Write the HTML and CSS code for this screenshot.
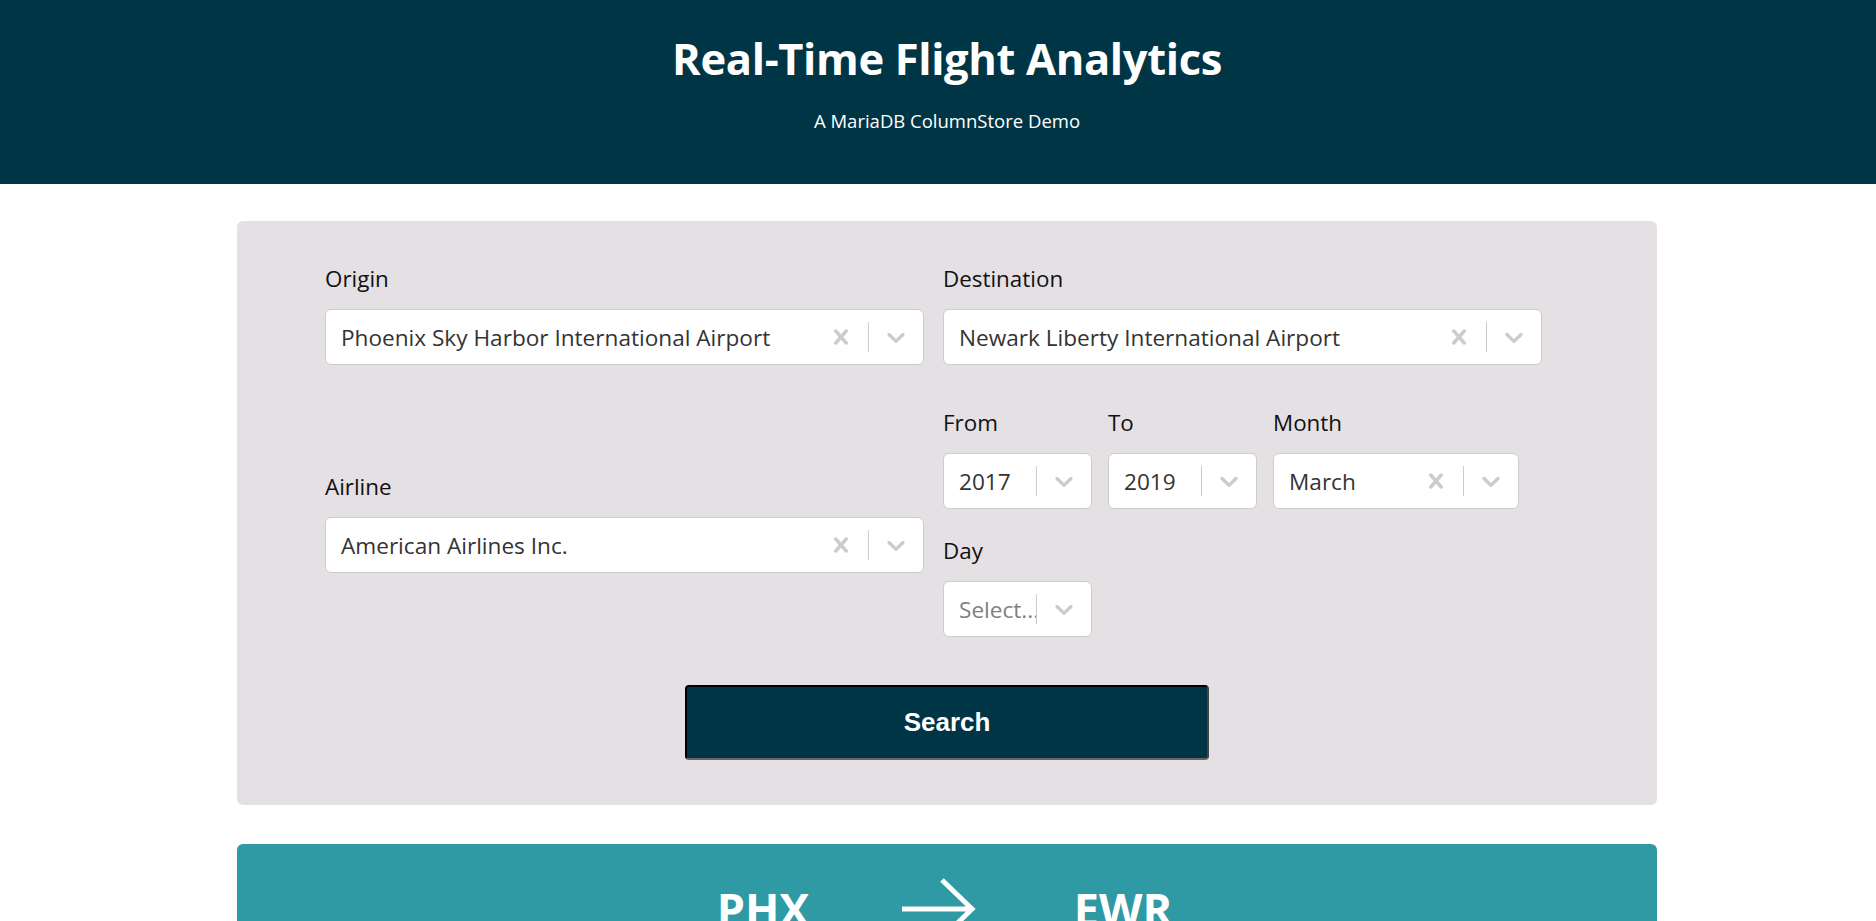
FILE: index.html
```html
<!DOCTYPE html>
<html lang="en">
<head>
<meta charset="utf-8">
<title>Real-Time Flight Analytics</title>
<link rel="stylesheet" href="styles.css">
</head>
<body>
<header class="hero">
  <h1 class="hero-title">Real-Time Flight Analytics</h1>
  <p class="hero-sub">A MariaDB ColumnStore Demo</p>
</header>
<main class="page">
  <section class="search-panel">
    <div class="form-grid">
      <div class="field">
        <label class="field-label">Origin</label>
        <div class="select">
          <div class="select-value">Phoenix Sky Harbor International Airport</div>
          <div class="select-ind"><svg viewBox="0 0 20 20" class="ico"><path d="M14.348 14.849c-0.469 0.469-1.229 0.469-1.697 0l-2.651-3.030-2.651 3.029c-0.469 0.469-1.229 0.469-1.697 0-0.469-0.469-0.469-1.229 0-1.697l2.758-3.15-2.759-3.152c-0.469-0.469-0.469-1.228 0-1.697s1.228-0.469 1.697 0l2.652 3.031 2.651-3.031c0.469-0.469 1.228-0.469 1.697 0s0.469 1.229 0 1.697l-2.758 3.152 2.758 3.15c0.469 0.469 0.469 1.229 0 1.698z"/></svg></div>
          <span class="select-sep"></span>
          <div class="select-ind"><svg viewBox="0 0 20 20" class="ico"><path d="M4.516 7.548c0.436-0.446 1.043-0.481 1.576 0l3.908 3.747 3.908-3.747c0.533-0.481 1.141-0.446 1.574 0 0.436 0.445 0.408 1.197 0 1.615-0.406 0.418-4.695 4.502-4.695 4.502-0.217 0.223-0.502 0.335-0.787 0.335s-0.57-0.112-0.789-0.335c0 0-4.287-4.084-4.695-4.502s-0.436-1.170 0-1.615z"/></svg></div>
        </div>
      </div>
      <div class="field">
        <label class="field-label">Destination</label>
        <div class="select">
          <div class="select-value">Newark Liberty International Airport</div>
          <div class="select-ind"><svg viewBox="0 0 20 20" class="ico"><path d="M14.348 14.849c-0.469 0.469-1.229 0.469-1.697 0l-2.651-3.030-2.651 3.029c-0.469 0.469-1.229 0.469-1.697 0-0.469-0.469-0.469-1.229 0-1.697l2.758-3.15-2.759-3.152c-0.469-0.469-0.469-1.228 0-1.697s1.228-0.469 1.697 0l2.652 3.031 2.651-3.031c0.469-0.469 1.228-0.469 1.697 0s0.469 1.229 0 1.697l-2.758 3.152 2.758 3.15c0.469 0.469 0.469 1.229 0 1.698z"/></svg></div>
          <span class="select-sep"></span>
          <div class="select-ind"><svg viewBox="0 0 20 20" class="ico"><path d="M4.516 7.548c0.436-0.446 1.043-0.481 1.576 0l3.908 3.747 3.908-3.747c0.533-0.481 1.141-0.446 1.574 0 0.436 0.445 0.408 1.197 0 1.615-0.406 0.418-4.695 4.502-4.695 4.502-0.217 0.223-0.502 0.335-0.787 0.335s-0.57-0.112-0.789-0.335c0 0-4.287-4.084-4.695-4.502s-0.436-1.170 0-1.615z"/></svg></div>
        </div>
      </div>
      <div class="field field-airline">
        <label class="field-label">Airline</label>
        <div class="select">
          <div class="select-value">American Airlines Inc.</div>
          <div class="select-ind"><svg viewBox="0 0 20 20" class="ico"><path d="M14.348 14.849c-0.469 0.469-1.229 0.469-1.697 0l-2.651-3.030-2.651 3.029c-0.469 0.469-1.229 0.469-1.697 0-0.469-0.469-0.469-1.229 0-1.697l2.758-3.15-2.759-3.152c-0.469-0.469-0.469-1.228 0-1.697s1.228-0.469 1.697 0l2.652 3.031 2.651-3.031c0.469-0.469 1.228-0.469 1.697 0s0.469 1.229 0 1.697l-2.758 3.152 2.758 3.15c0.469 0.469 0.469 1.229 0 1.698z"/></svg></div>
          <span class="select-sep"></span>
          <div class="select-ind"><svg viewBox="0 0 20 20" class="ico"><path d="M4.516 7.548c0.436-0.446 1.043-0.481 1.576 0l3.908 3.747 3.908-3.747c0.533-0.481 1.141-0.446 1.574 0 0.436 0.445 0.408 1.197 0 1.615-0.406 0.418-4.695 4.502-4.695 4.502-0.217 0.223-0.502 0.335-0.787 0.335s-0.57-0.112-0.789-0.335c0 0-4.287-4.084-4.695-4.502s-0.436-1.170 0-1.615z"/></svg></div>
        </div>
      </div>
      <div class="date-group">
        <div class="date-row">
          <div class="field field-year">
            <label class="field-label">From</label>
            <div class="select">
              <div class="select-value">2017</div>
              <span class="select-sep"></span>
              <div class="select-ind"><svg viewBox="0 0 20 20" class="ico"><path d="M4.516 7.548c0.436-0.446 1.043-0.481 1.576 0l3.908 3.747 3.908-3.747c0.533-0.481 1.141-0.446 1.574 0 0.436 0.445 0.408 1.197 0 1.615-0.406 0.418-4.695 4.502-4.695 4.502-0.217 0.223-0.502 0.335-0.787 0.335s-0.57-0.112-0.789-0.335c0 0-4.287-4.084-4.695-4.502s-0.436-1.170 0-1.615z"/></svg></div>
            </div>
          </div>
          <div class="field field-year">
            <label class="field-label">To</label>
            <div class="select">
              <div class="select-value">2019</div>
              <span class="select-sep"></span>
              <div class="select-ind"><svg viewBox="0 0 20 20" class="ico"><path d="M4.516 7.548c0.436-0.446 1.043-0.481 1.576 0l3.908 3.747 3.908-3.747c0.533-0.481 1.141-0.446 1.574 0 0.436 0.445 0.408 1.197 0 1.615-0.406 0.418-4.695 4.502-4.695 4.502-0.217 0.223-0.502 0.335-0.787 0.335s-0.57-0.112-0.789-0.335c0 0-4.287-4.084-4.695-4.502s-0.436-1.170 0-1.615z"/></svg></div>
            </div>
          </div>
          <div class="field field-month">
            <label class="field-label">Month</label>
            <div class="select">
              <div class="select-value">March</div>
              <div class="select-ind"><svg viewBox="0 0 20 20" class="ico"><path d="M14.348 14.849c-0.469 0.469-1.229 0.469-1.697 0l-2.651-3.030-2.651 3.029c-0.469 0.469-1.229 0.469-1.697 0-0.469-0.469-0.469-1.229 0-1.697l2.758-3.15-2.759-3.152c-0.469-0.469-0.469-1.228 0-1.697s1.228-0.469 1.697 0l2.652 3.031 2.651-3.031c0.469-0.469 1.228-0.469 1.697 0s0.469 1.229 0 1.697l-2.758 3.152 2.758 3.15c0.469 0.469 0.469 1.229 0 1.698z"/></svg></div>
              <span class="select-sep"></span>
              <div class="select-ind"><svg viewBox="0 0 20 20" class="ico"><path d="M4.516 7.548c0.436-0.446 1.043-0.481 1.576 0l3.908 3.747 3.908-3.747c0.533-0.481 1.141-0.446 1.574 0 0.436 0.445 0.408 1.197 0 1.615-0.406 0.418-4.695 4.502-4.695 4.502-0.217 0.223-0.502 0.335-0.787 0.335s-0.57-0.112-0.789-0.335c0 0-4.287-4.084-4.695-4.502s-0.436-1.170 0-1.615z"/></svg></div>
            </div>
          </div>
        </div>
        <div class="date-row">
          <div class="field field-year">
            <label class="field-label">Day</label>
            <div class="select">
              <div class="select-value placeholder">Select...</div>
              <span class="select-sep"></span>
              <div class="select-ind"><svg viewBox="0 0 20 20" class="ico"><path d="M4.516 7.548c0.436-0.446 1.043-0.481 1.576 0l3.908 3.747 3.908-3.747c0.533-0.481 1.141-0.446 1.574 0 0.436 0.445 0.408 1.197 0 1.615-0.406 0.418-4.695 4.502-4.695 4.502-0.217 0.223-0.502 0.335-0.787 0.335s-0.57-0.112-0.789-0.335c0 0-4.287-4.084-4.695-4.502s-0.436-1.170 0-1.615z"/></svg></div>
            </div>
          </div>
        </div>
      </div>
    </div>
    <div class="actions">
      <button class="search-btn" type="button">Search</button>
    </div>
  </section>
  <section class="route-panel">
    <div class="route">
      <span class="route-code">PHX</span>
      <span class="route-arrow"><svg viewBox="0 0 76 64" class="arrow-svg"><path d="M2 32 H70 M42 3 L72 32 L42 61" fill="none" stroke="#fff" stroke-width="5"/></svg></span>
      <span class="route-code">EWR</span>
    </div>
  </section>
</main>
</body>
</html>
```
FILE: styles.css
```css
html, body {
  margin: 0;
  padding: 0;
  background: #ffffff;
}
body {
  font-family: "Open Sans", "Noto Sans", sans-serif;
  color: #000;
}
.hero {
  background: #003545;
  color: #fff;
  height: 184px;
  box-sizing: border-box;
  padding: 30px 0 0 18px;
  text-align: center;
}
.hero-title {
  margin: 0;
  font-size: 43.5px;
  font-weight: 700;
  line-height: 58px;
  letter-spacing: -0.35px;
}
.hero-sub {
  margin: 21px 0 0;
  font-size: 18.5px;
  line-height: 24px;
}
.page {
  padding: 37px 0 0 18px;
}
.search-panel {
  width: 1420px;
  margin: 0 auto;
  box-sizing: border-box;
  background: #e5e0e4;
  border-radius: 6px;
  padding: 40px 0 45px 88px;
}
.form-grid {
  display: grid;
  grid-template-columns: 599px 599px;
  column-gap: 19px;
  row-gap: 40px;
  align-items: center;
}
.field {
  display: flex;
  flex-direction: column;
}
.field-label {
  font-size: 22.4px;
  line-height: 36px;
  margin-bottom: 12px;
  color: #111;
}
.select {
  display: flex;
  align-items: center;
  height: 56px;
  box-sizing: border-box;
  background: #fff;
  border: 1px solid #cccccc;
  border-radius: 6px;
}
.select-value {
  flex: 1;
  min-width: 0;
  align-self: stretch;
  display: flex;
  align-items: center;
  padding: 0 12px 0 15px;
  overflow: hidden;
  white-space: nowrap;
  font-size: 22.6px;
  color: #333333;
}
.select-value.placeholder {
  color: #808080;
  padding-right: 0;
}
.select-ind {
  display: flex;
  align-items: center;
  padding: 12px;
  color: #cccccc;
}
.ico {
  width: 30px;
  height: 30px;
  fill: currentColor;
  display: block;
}
.select-sep {
  width: 1px;
  align-self: stretch;
  margin: 12px 0;
  background: #cccccc;
}
.date-group {
  display: flex;
  flex-direction: column;
  gap: 24px;
}
.date-row {
  display: flex;
  gap: 16px;
}
.field-year {
  width: 149px;
}
.field-month {
  width: 246px;
}
.actions {
  display: flex;
  justify-content: center;
  padding-right: 88px;
  margin-top: 48px;
}
.search-btn {
  width: 524px;
  height: 75px;
  box-sizing: border-box;
  background: #003545;
  color: #fff;
  font-family: "Liberation Sans", Arial, sans-serif;
  font-weight: 700;
  font-size: 26px;
  border: 2px solid #000;
  border-bottom-color: #666;
  border-right-color: #444;
  border-radius: 4px;
  padding: 0;
}
.route-panel {
  width: 1420px;
  margin: 39px auto 0;
  box-sizing: border-box;
  background: #2f9aa3;
  border-radius: 6px;
  padding: 33px 0 60px;
  color: #fff;
}
.route {
  display: flex;
  justify-content: center;
  align-items: center;
  padding-right: 8px;
}
.route-code {
  width: 180px;
  text-align: center;
  font-size: 45px;
  font-weight: 700;
  line-height: 64px;
}
.route-arrow {
  width: 180px;
  display: flex;
  justify-content: center;
  padding-right: 10px;
  box-sizing: border-box;
}
.arrow-svg {
  width: 76px;
  height: 64px;
  display: block;
}
```
